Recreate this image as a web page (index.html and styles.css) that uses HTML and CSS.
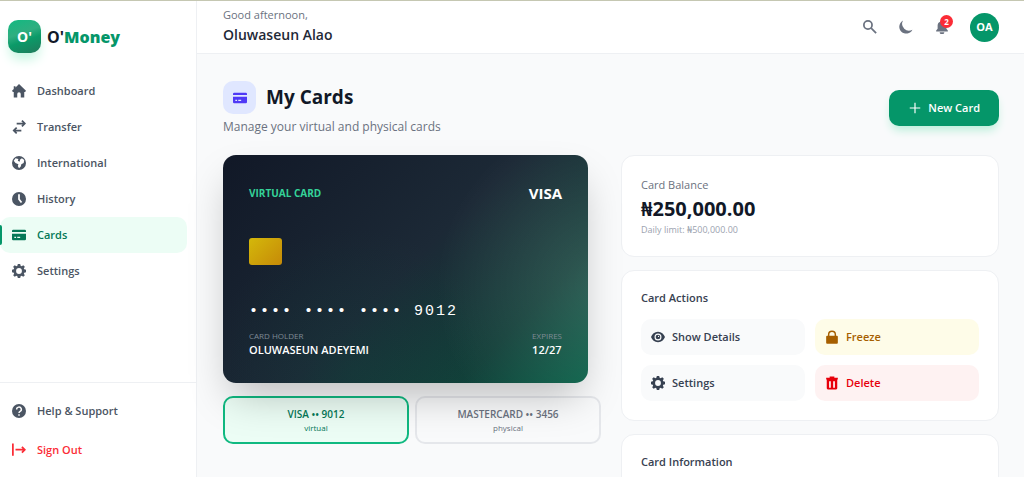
FILE: index.html
```
<!DOCTYPE html>
<html lang="en">
<head>
    <meta charset="utf-8" />
    <meta name="viewport" content="width=device-width, initial-scale=1" />
    <title>O'Money - My Cards</title>
    <link rel="stylesheet" href="styles.css">
</head>
<body>
    <svg class="sprite" aria-hidden="true">
        <symbol id="icon-card" viewBox="0 0 24 24">
            <path d="M2 3h20a2 2 0 0 1 2 2v2H0V5a2 2 0 0 1 2-2z" />
            <path fill-rule="evenodd" d="M0 10h24v9a2 2 0 0 1-2 2H2a2 2 0 0 1-2-2zm4 5v2h3v-2zm5 0v2h5v-2z" />
        </symbol>
        <symbol id="icon-gear" viewBox="0 0 24 24">
            <path fill-rule="evenodd" d="M10 0h4l.8 3.1 1.7.7L19.3 2 22 4.8l-1.700 2.700.7 1.700L24 10v4l-3 .8-.7 1.700L22 19.300 19.300 22l-2.800-1.700-1.700.7L14 24h-4l-.8-3-1.700-.7L4.700 22 2 19.300l1.700-2.800L3 14.800 0 14v-4l3-.8.7-1.700L2 4.800 4.700 2l2.800 1.800 1.700-.7zM12 7a5 5 0 1 0 0 10 5 5 0 0 0 0-10z" />
        </symbol>
    </svg>

    <aside class="sidebar">
        <a class="brand" href="#">
            <span class="logo">O'</span>
            <span class="brandname">O'<b>Money</b></span>
        </a>
        <nav class="menu">
            <a href="#">
                <svg viewBox="0 0 24 24"><path d="M12 0 24 11.500 22.500 13.500H21V23h-6v-6a3 3 0 0 0-6 0v6H3v-9.500H1.500L0 11.500 3 8.600V4h3v1.800z" /></svg>
                Dashboard
            </a>
            <a href="#">
                <svg viewBox="0 0 24 24" class="line"><path d="M8 6h14M17 1l5 5-5 5M16 18H3M8 13l-5 5 5 5" /></svg>
                Transfer
            </a>
            <a href="#">
                <svg viewBox="0 0 24 24"><path fill-rule="evenodd" d="M12 0a12 12 0 1 0 0 24 12 12 0 0 0 0-24zM3 8l3-4 5 1-1 3 3 2 1-4 3-2 4 3-1 5-4 2-1 4-3 3-2-4 1-3-5-2z" /></svg>
                International
            </a>
            <a href="#">
                <svg viewBox="0 0 24 24"><path fill-rule="evenodd" d="M12 0a12 12 0 1 0 0 24 12 12 0 0 0 0-24zM10.500 4h3v8l4 5-2.400 1.800-4.600-5.800z" /></svg>
                History
            </a>
            <a href="#" class="active" aria-current="page">
                <svg viewBox="0 0 24 24"><use href="#icon-card" /></svg>
                Cards
            </a>
            <a href="#">
                <svg viewBox="0 0 24 24"><use href="#icon-gear" /></svg>
                Settings
            </a>
        </nav>
        <nav class="menu bottom">
            <a href="#">
                <svg viewBox="0 0 24 24"><circle cx="12" cy="12" r="12" /><path class="mark" d="M8 9.500a4 4 0 1 1 6 3.200c-1.400.9-2 1.400-2 2.800M12 17.500v2.500" /></svg>
                Help &amp; Support
            </a>
            <a href="#" class="signout">
                <svg viewBox="0 0 24 24" class="line"><path d="M1.500 1v21M6 11.500h16M17 6.500l5 5-5 5" /></svg>
                Sign Out
            </a>
        </nav>
    </aside>

    <div class="page">
        <header class="topbar">
            <div class="greeting">
                <span>Good afternoon,</span>
                <strong>Oluwaseun Alao</strong>
            </div>
            <div class="tools">
                <button type="button" aria-label="Search">
                    <svg viewBox="0 0 24 24" class="line"><circle cx="8.500" cy="8.500" r="7" /><path d="M14 14l8.500 8.500" /></svg>
                </button>
                <button type="button" aria-label="Dark mode">
                    <svg viewBox="0 0 24 24"><path d="M7 1A11.500 11.500 0 0 0 23 16.500 11.800 11.800 0 1 1 7 1z" /></svg>
                </button>
                <button type="button" aria-label="Notifications">
                    <svg viewBox="0 0 24 24"><path d="M12 0a3 3 0 0 1 2.500 2.500A7.500 7.500 0 0 1 19.500 10v5l2.500 3v1.500H2V18l2.500-3v-5a7.500 7.500 0 0 1 5-7.500A3 3 0 0 1 12 0zM8 21h8a4 3.500 0 0 1-8 0z" /></svg>
                    <span class="badge">2</span>
                </button>
                <button type="button" class="avatar">OA</button>
            </div>
        </header>

        <main>
            <section class="heading">
                <div>
                    <h1>
                        <span class="headicon"><svg viewBox="0 0 24 24"><use href="#icon-card" /></svg></span>
                        My Cards
                    </h1>
                    <p>Manage your virtual and physical cards</p>
                </div>
                <button type="button" class="newcard">
                    <svg viewBox="0 0 24 24" class="line"><path d="M12 3v18M3 12h18" /></svg>
                    New Card
                </button>
            </section>

            <section class="columns">
                <div class="wallet">
                    <article class="bankcard">
                        <div class="row">
                            <span class="cardtype">VIRTUAL CARD</span>
                            <span class="network">VISA</span>
                        </div>
                        <div class="chip"></div>
                        <div class="number">•••• •••• •••• 9012</div>
                        <div class="row">
                            <div class="field"><small>CARD HOLDER</small>OLUWASEUN ADEYEMI</div>
                            <div class="field"><small>EXPIRES</small>12/27</div>
                        </div>
                    </article>
                    <div class="picker">
                        <button type="button" class="selected">VISA •• 9012<small>virtual</small></button>
                        <button type="button">MASTERCARD •• 3456<small>physical</small></button>
                    </div>
                </div>

                <div class="details">
                    <section class="panel balance">
                        <p>Card Balance</p>
                        <strong>₦250,000.00</strong>
                        <small>Daily limit: ₦500,000.00</small>
                    </section>
                    <section class="panel">
                        <h2>Card Actions</h2>
                        <div class="actions">
                            <button type="button">
                                <svg viewBox="0 0 24 24"><path fill-rule="evenodd" d="M12 3C6 3 2 7 0 12c2 5 6 9 12 9s10-4 12-9c-2-5-6-9-12-9zm0 3a6 6 0 1 1 0 12 6 6 0 0 1 0-12z" /><path fill-rule="evenodd" d="M12 8a4 4 0 1 0 0 8 4 4 0 0 0 0-8zm0 2a2 2 0 0 1 2 2h-2z" /></svg>
                                Show Details
                            </button>
                            <button type="button" class="freeze">
                                <svg viewBox="0 0 24 24"><path fill-rule="evenodd" d="M5 10V8a7 7 0 0 1 14 0v2h1.500a1.500 1.500 0 0 1 1.500 1.500V22a1.500 1.500 0 0 1-1.500 1.500h-17A1.500 1.500 0 0 1 2 22V11.500A1.500 1.500 0 0 1 3.500 10zm2.500 0h9V8a4.500 4.500 0 0 0-9 0z" /></svg>
                                Freeze
                            </button>
                            <button type="button">
                                <svg viewBox="0 0 24 24"><use href="#icon-gear" /></svg>
                                Settings
                            </button>
                            <button type="button" class="delete">
                                <svg viewBox="0 0 24 24"><path fill-rule="evenodd" d="M8 3V1h8v2h6v3H2V3zM3 6h18v15a2 2 0 0 1-2 2H5a2 2 0 0 1-2-2zm4 3v11h3V9zm7 0v11h3V9z" /></svg>
                                Delete
                            </button>
                        </div>
                    </section>
                    <section class="panel">
                        <h2>Card Information</h2>
                    </section>
                </div>
            </section>
        </main>
    </div>
</body>
</html>
```
FILE: styles.css
```
* {
    box-sizing: border-box;
}

body {
    margin: 0;
    height: 100vh;
    display: flex;
    overflow: hidden;
    border-top: 1px solid #c5c7b2;
    background-color: #f9fafb;
    color: #111827;
    font: 11px/16px "Segoe UI", "Open Sans", "Noto Sans", sans-serif;
}

h1, h2, p {
    margin: 0;
}

a {
    color: inherit;
    text-decoration: none;
}

button {
    border: 0;
    padding: 0;
    background: none;
    color: inherit;
    font: inherit;
    cursor: pointer;
}

small {
    display: block;
}

svg {
    width: 14px;
    height: 14px;
    flex: none;
    fill: currentColor;
}

    svg.line {
        fill: none;
        stroke: currentColor;
        stroke-width: 3;
    }

.sprite {
    display: none;
}

/* sidebar */
.sidebar {
    width: 197px;
    flex: none;
    display: flex;
    flex-direction: column;
    background-color: white;
    border-right: 1px solid #eef0f3;
}

.brand {
    display: flex;
    align-items: center;
    gap: 6px;
    padding: 19px 8px 20px;
}

.logo {
    width: 33px;
    height: 33px;
    display: grid;
    place-items: center;
    border-radius: 10px;
    background: linear-gradient(160deg, #12b981, #2fae80 40%, #0b9a68 60%, #217a5b);
    box-shadow: 0 8px 12px -2px #c4f5e0;
    color: white;
    font-size: 14px;
    font-weight: 700;
}

.brandname {
    font-size: 16px;
    font-weight: 700;
    line-height: 18px;
}

    .brandname b {
        color: #059669;
    }

.menu {
    padding-right: 9px;
}

    .menu a {
        position: relative;
        display: flex;
        align-items: center;
        gap: 11px;
        height: 36px;
        padding-left: 12px;
        border-radius: 10px;
        color: #4b5563;
        font-weight: 600;
    }

    .menu .active {
        background-color: #ecfdf5;
        color: #047857;
    }

        .menu .active::before {
            content: "";
            position: absolute;
            left: 0;
            width: 2px;
            height: 20px;
            border-radius: 0 2px 2px 0;
            background-color: #059669;
        }

    .menu .mark {
        fill: none;
        stroke: white;
        stroke-width: 2.5;
    }

.bottom {
    display: grid;
    gap: 3px;
    margin-top: auto;
    padding-top: 10px;
    padding-bottom: 9px;
    border-top: 1px solid #eef0f3;
}

.menu .signout {
    color: #fb2c36;
}

/* top bar */
.page {
    flex: 1;
    min-width: 0;
}

.topbar {
    display: flex;
    justify-content: space-between;
    align-items: center;
    height: 53px;
    padding: 0 25px 0 26px;
    background-color: white;
    border-bottom: 1px solid #eef0f3;
}

.greeting span {
    display: block;
    color: #6b7280;
}

.greeting strong {
    display: block;
    font-size: 14px;
    font-weight: 600;
    line-height: 24px;
    color: #1f2937;
}

.tools {
    display: flex;
    align-items: center;
    gap: 22px;
    color: #6b7280;
}

    .tools button {
        position: relative;
        display: grid;
        place-items: center;
    }

.badge {
    position: absolute;
    top: -5px;
    left: 5px;
    width: 13px;
    height: 13px;
    border-radius: 50%;
    background-color: #fb2c36;
    color: white;
    font-size: 8px;
    font-weight: 700;
    line-height: 13px;
}

.tools .avatar {
    width: 29px;
    height: 29px;
    margin-left: -1px;
    border-radius: 50%;
    background-color: #059669;
    color: white;
    font-size: 11px;
    font-weight: 700;
}

/* content */
main {
    padding: 27px 25px 0 26px;
}

.heading {
    display: flex;
    justify-content: space-between;
    align-items: center;
    margin-bottom: 20px;
}

    .heading h1 {
        display: flex;
        align-items: center;
        gap: 10px;
        font-size: 19px;
        line-height: 33px;
    }

    .heading p {
        margin-top: 5px;
        color: #6b7280;
        font-size: 12px;
    }

.headicon {
    width: 33px;
    height: 33px;
    display: grid;
    place-items: center;
    border-radius: 10px;
    background-color: #e0e7ff;
    color: #4f39f6;
}

.newcard {
    display: flex;
    align-items: center;
    gap: 6px;
    height: 36px;
    padding: 0 19px;
    border-radius: 10px;
    background-color: #059669;
    box-shadow: 0 6px 10px -2px #b7eed8;
    color: white;
    font-weight: 600;
}

    .newcard svg.line {
        stroke-width: 2;
    }

.columns {
    display: grid;
    grid-template-columns: 1fr 1fr;
    gap: 20px;
}

.bankcard {
    position: relative;
    display: flex;
    flex-direction: column;
    max-width: 365px;
    padding: 28px 26px 25px;
    border-radius: 13px;
    background:
        radial-gradient(circle at 36% 95%, rgba(6, 95, 70, .15), transparent 45%),
        radial-gradient(circle at 105% 58%, rgba(255, 255, 255, .14), transparent 42%),
        linear-gradient(135deg, #111827, #1c2936 50%, #123f39 78%, #065f46);
    box-shadow: 0 20px 40px -8px rgba(0, 0, 0, .25);
    color: white;
}

.row {
    display: flex;
    justify-content: space-between;
    align-items: center;
}

.cardtype {
    color: #34d399;
    font-size: 10px;
    font-weight: 700;
}

.network {
    font-size: 15px;
    font-weight: 700;
    line-height: 20px;
}

.chip {
    width: 33px;
    height: 27px;
    margin: 35px 0 37px;
    border-radius: 3px;
    background: linear-gradient(135deg, #d4b80a, #c68a08);
}

.number {
    font: 15px/20px "Liberation Mono", monospace;
    letter-spacing: 2px;
    white-space: nowrap;
    margin-bottom: 7px;
}

.field {
    font-size: 11px;
    font-weight: 600;
}

    .field small {
        color: #7f8b95;
        font-size: 8px;
        font-weight: 400;
        line-height: 13px;
    }

.picker {
    display: grid;
    grid-template-columns: 1fr 1fr;
    gap: 6px;
    margin-top: 13px;
}

    .picker button {
        padding: 8px;
        border: 2px solid #e5e7eb;
        border-radius: 10px;
        color: #6b7280;
        font-size: 10px;
        font-weight: 600;
    }

    .picker small {
        font-size: 8px;
        font-weight: 400;
        line-height: 12px;
    }

    .picker .selected {
        border-color: #10b981;
        background-color: #ecfdf5;
        color: #047857;
    }

.details {
    display: grid;
    gap: 13px;
}

.panel {
    padding: 19px;
    border: 1px solid #eef0f3;
    border-radius: 13px;
    background-color: white;
}

    .panel h2 {
        margin-bottom: 13px;
        color: #374151;
        font-size: 11px;
        font-weight: 600;
    }

.balance p {
    color: #6b7280;
    line-height: 20px;
}

.balance strong {
    display: block;
    font-size: 20px;
    line-height: 28px;
}

.balance small {
    color: #9ca3af;
    font-size: 9px;
    line-height: 14px;
}

.actions {
    display: grid;
    grid-template-columns: 1fr 1fr;
    gap: 10px;
}

    .actions button {
        display: flex;
        align-items: center;
        gap: 7px;
        height: 36px;
        padding: 0 10px;
        border-radius: 10px;
        background-color: #f9fafb;
        color: #374151;
        font-weight: 600;
    }

    .actions .freeze {
        background-color: #fefce8;
        color: #a65f00;
    }

    .actions .delete {
        background-color: #fef2f2;
        color: #e7000b;
    }
```
